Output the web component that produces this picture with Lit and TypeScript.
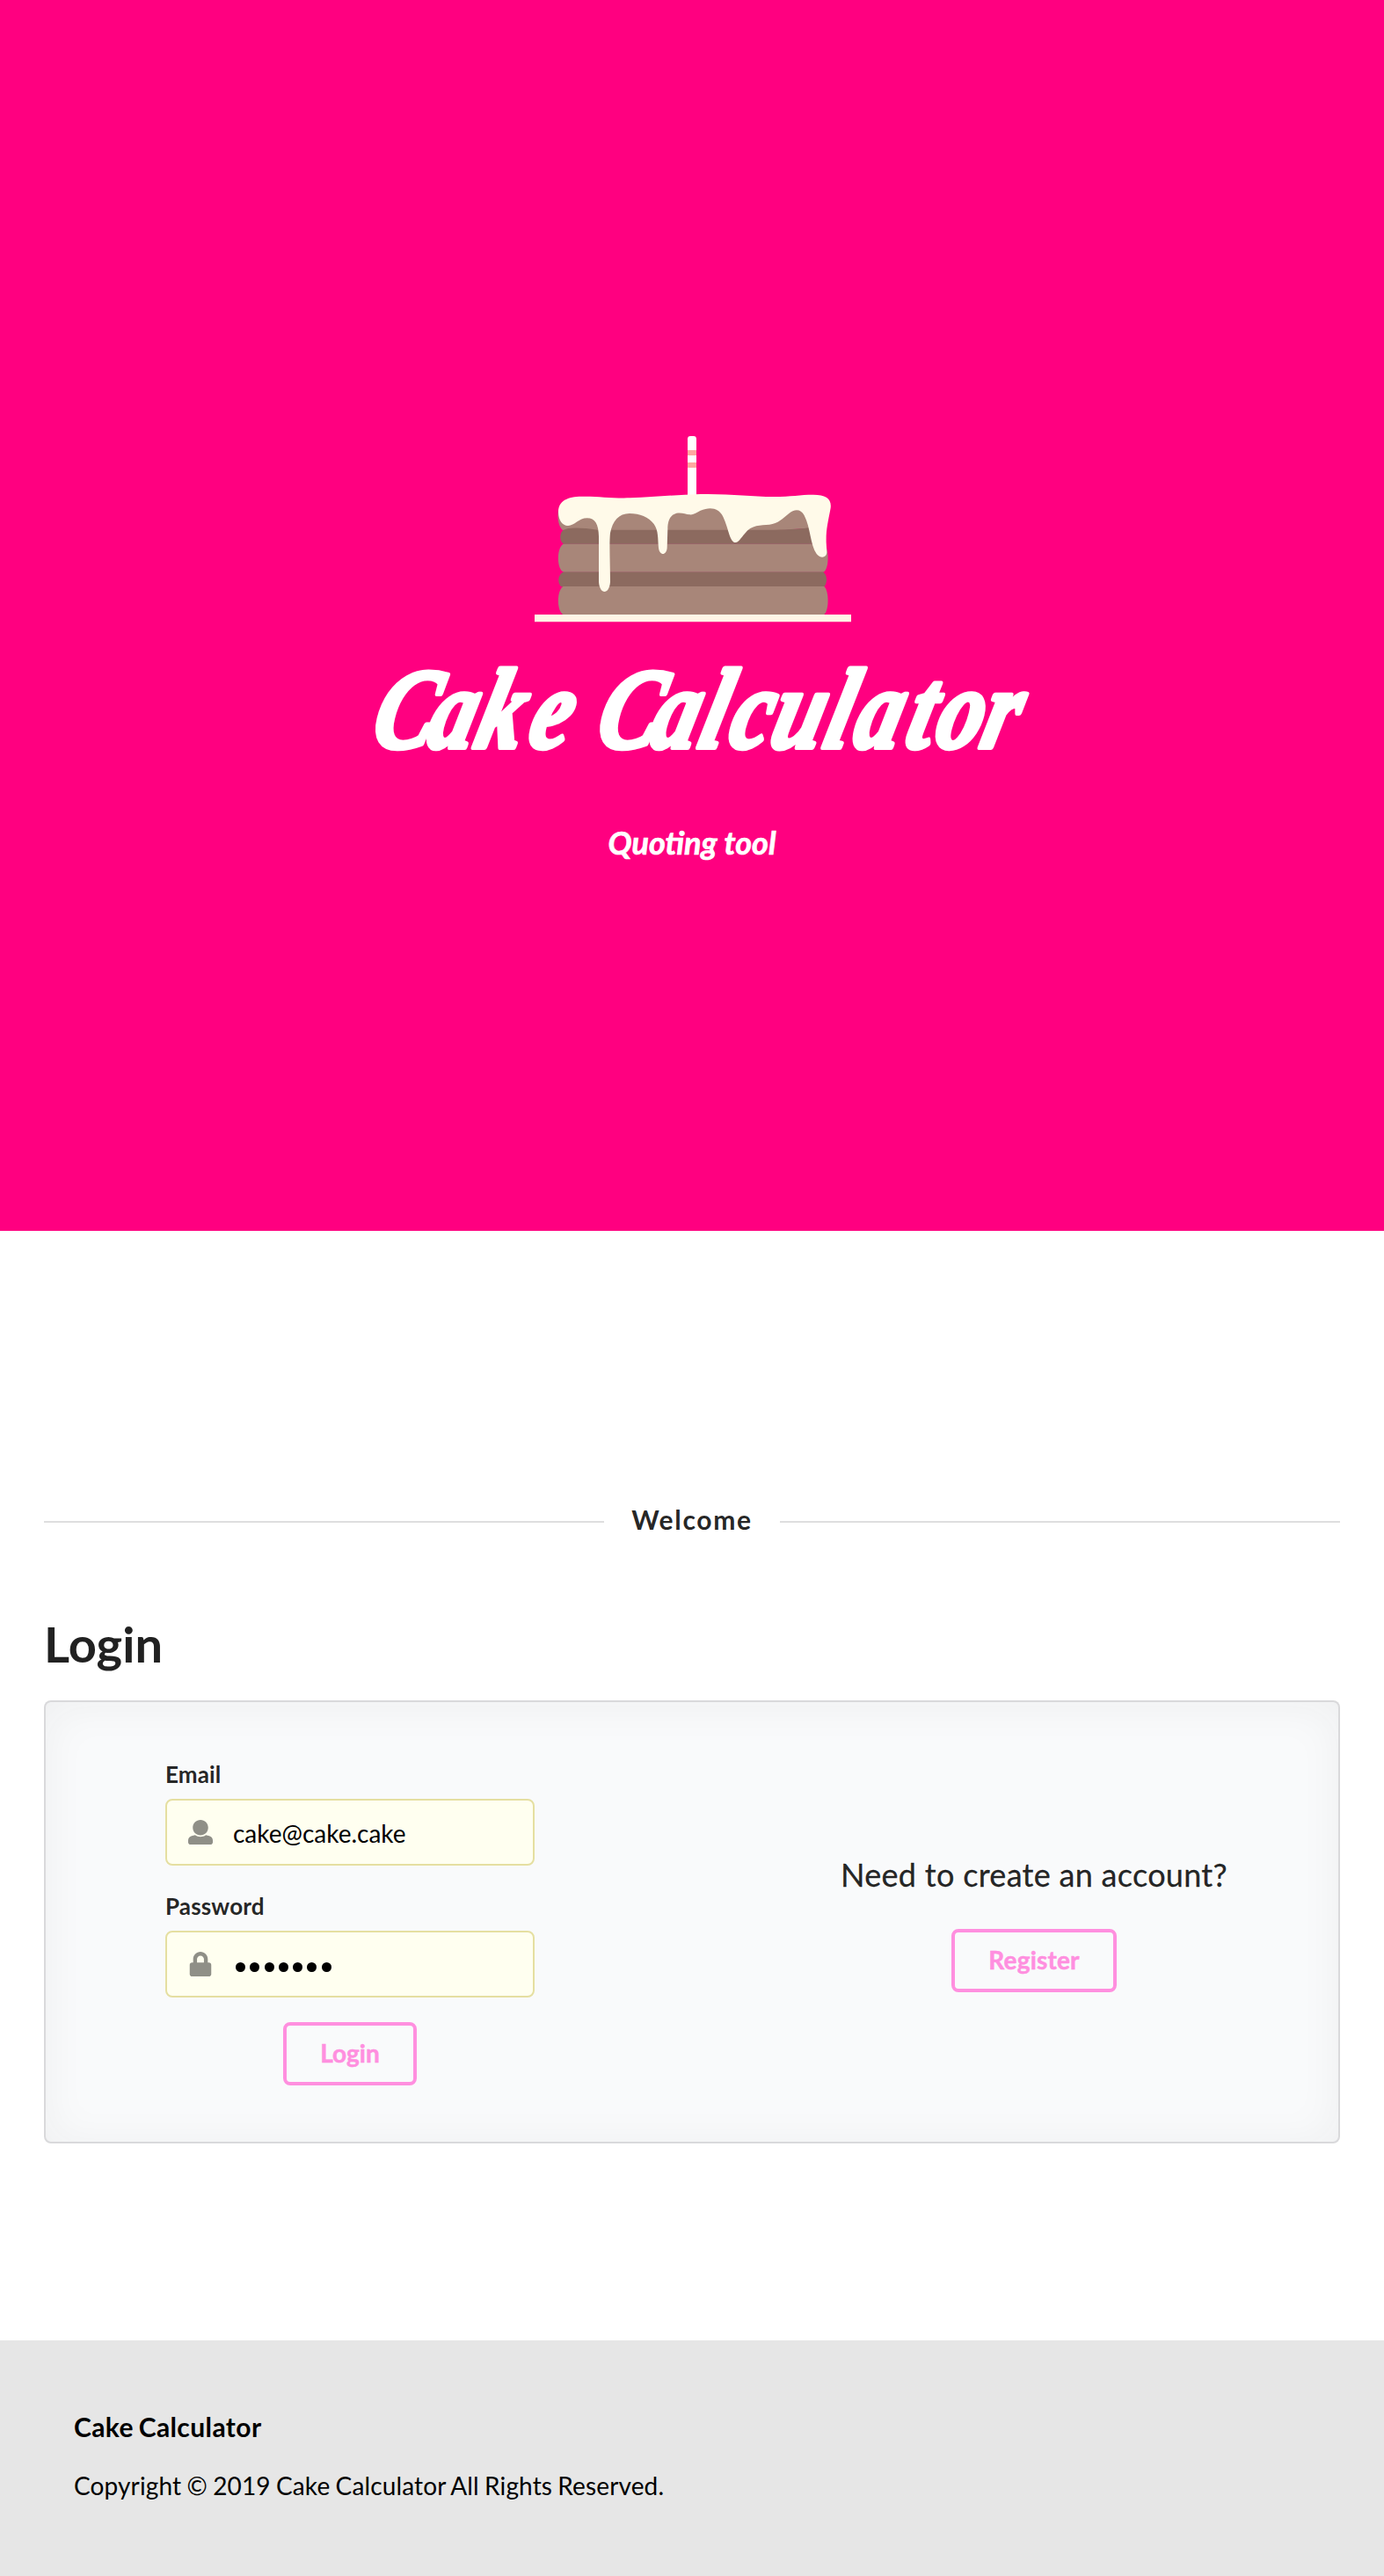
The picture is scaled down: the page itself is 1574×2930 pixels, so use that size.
import { LitElement, html, css } from "lit";
import { customElement } from "lit/decorators.js";

@customElement("cake-logo")
class CakeLogo extends LitElement {
  static styles = css`
    :host { display: block; }
    svg { display: block; overflow: visible; }
    .script {
      font-family: "Liberation Serif", serif;
      font-weight: 700;
      font-style: italic;
      font-size: 129px;
      fill: #fff;
      stroke: #fff;
      stroke-width: 6px;
      stroke-linejoin: round;
    }
  `;
  render() {
    return html`
      <svg width="900" height="420" viewBox="337 480 900 420" role="img" aria-label="Cake Calculator">
        <g transform="translate(590 480) scale(0.333333)">
          <path fill="#9c656b" d="M152 365H1040V657H152z" />
          <path fill="#a88679" d="M135 300C130 330 138 362 151 369L300 370H870L1000 362L1040 300V275H160z" />
          <path fill="#8c6a5f" d="M151 369C170 358 215 360 268 368H870C930 367 965 364 1000 359L1030 415H151C139 405 138 382 151 369z" />
          <path fill="#a88679" d="M151 417H1042C1059 432 1059 496 1042 511H151C129 500 129 430 151 417z" />
          <path fill="#8c6a5f" d="M149 513H1040C1054 525 1052 550 1042 562H145C132 550 132 525 149 513z" />
          <path fill="#a88679" d="M151 561H1042C1059 576 1059 642 1042 657H151C129 644 129 576 151 561z" />
          <path fill="#fff" d="M576 260V58Q576 48 586 48H596Q606 48 606 58V260z" />
          <path fill="#ffa8a0" d="M576 96h30v18h-30zM576 138h30v18h-30z" />
          <path fill="#fffae9" d="M135 308C134 270 165 254 215 254C275 253 315 261 380 259C465 256 540 248 620 246C720 244 790 255 870 255C930 255 960 248 1005 248C1048 248 1068 262 1064 293C1055 342 1048 365 1049 410L1051 445C1050 465 1028 466 1016 450C994 420 996 360 974 319C962 296 941 296 921 313C901 329 885 347 855 350C824 353 795 349 771 381C758 396 749 411 740 411C719 411 717 365 697 323C682 292 652 289 620 302C605 309 594 318 583 316C569 314 556 308 538 311C516 317 508 338 508 364L506 430C504 457 480 457 477 430C474 397 477 371 461 348C443 324 413 312 378 312C341 312 320 338 312 379C308 416 312 484 312 545C309 590 276 590 273 545L273 390C272 350 261 328 233 328C205 328 190 354 168 354C148 353 136 335 135 308z" />
          <path fill="#fff5e6" d="M54 657H1134V682H54z" />
        </g>
        <g transform="translate(0 850) skewX(-14) scale(0.8 1)">
          <text class="script" y="0" x="524 603 671 747 800 843 920 989 1032 1091 1167 1209 1283 1325 1390">Cake Calculator</text>
        </g>
      </svg>
    `;
  }
}

@customElement("app-root")
class AppRoot extends LitElement {
  static styles = css`
    :host {
      display: block;
      font-family: Lato, "Liberation Sans", sans-serif;
      font-size: 28px;
      line-height: 40px;
      color: rgba(0, 0, 0, 0.87);
      background: #fff;
    }
    * { box-sizing: border-box; }
    h1, h2, h3, h4, p { margin: 0; }
    .hero {
      height: 1400px;
      padding-top: 480px;
      background: #ff0080;
      display: flex;
      flex-direction: column;
      align-items: center;
    }
    .tagline {
      margin-top: 35px;
      font-size: 36px;
      line-height: 46px;
      font-weight: 700;
      font-style: italic;
      color: #fff;
      -webkit-text-stroke: 0.7px #fff;
    }
    .main { padding: 311px 50px 224px; }
    .divider {
      display: flex;
      align-items: center;
      gap: 31px;
      height: 40px;
      font-size: 30px;
      font-weight: 700;
      letter-spacing: 1.7px;
    }
    .caption { height: 40px; line-height: 35px; }
    .rule { flex: 1; height: 2px; background: #dededf; }
    .title {
      margin-top: 83px;
      font-size: 56px;
      line-height: 72px;
      font-weight: 700;
    }
    .panel {
      margin-top: 28px;
      height: 504px;
      display: grid;
      grid-template-columns: 696px 1fr;
      align-items: center;
      border: 2px solid rgba(34, 36, 38, 0.15);
      border-radius: 8px;
      background: #f9fafb;
      box-shadow: 0 4px 50px rgba(34, 36, 38, 0.05) inset;
    }
    .form {
      width: 420px;
      margin-left: 136px;
      padding-top: 1px;
      display: flex;
      flex-direction: column;
    }
    .label { font-size: 26px; line-height: 34px; font-weight: 700; margin-bottom: 11px; letter-spacing: 0.15px; }
    .field {
      display: flex;
      align-items: center;
      height: 76px;
      margin-bottom: 29px;
      padding: 0 24px;
      border: 2px solid #e5dfa1;
      border-radius: 8px;
      background: #fffff0;
      color: #000;
    }
    .field.last { margin-bottom: 28px; }
    .value { padding-top: 2px; }
    .icon { width: 28px; height: 28px; margin-right: 23px; fill: #8f8f87; }
    .dots { display: flex; gap: 5.3px; padding: 6px 0 0 3px; }
    .dot { width: 11px; height: 11px; border-radius: 50%; background: #000; }
    .btn {
      width: 152px;
      height: 72px;
      padding: 0 0 2px;
      border: 4px solid #ff8fdf;
      border-radius: 8px;
      background: transparent;
      color: #ff8fdf;
      font: 700 28px/28px Lato, sans-serif;
      -webkit-text-stroke: 0.5px #ff8fdf;
    }
    .btn.wide { width: 188px; letter-spacing: 0.2px; }
    .form .btn { align-self: center; }
    .signup { display: flex; flex-direction: column; align-items: center; padding-left: 82px; }
    .ask {
      font-size: 36px;
      line-height: 52px;
      margin-bottom: 36px;
      letter-spacing: 0.3px;
      -webkit-text-stroke: 0.3px;
    }
    .footer {
      height: 268px;
      padding: 78px 84px;
      background: #e6e6e6;
      color: #000;
    }
    .brand { font-size: 30px; line-height: 40px; font-weight: 700; letter-spacing: 0.4px; word-spacing: -2px; }
    .copy { margin-top: 27px; letter-spacing: 0.13px; word-spacing: -1px; }
  `;
  render() {
    return html`
      <header class="hero">
        <cake-logo></cake-logo>
        <h2 class="tagline">Quoting tool</h2>
      </header>
      <main class="main">
        <h4 class="divider"><span class="rule"></span><span class="caption">Welcome</span><span class="rule"></span></h4>
        <h1 class="title">Login</h1>
        <section class="panel">
          <div class="form">
            <div class="label">Email</div>
            <div class="field">
              <svg class="icon" viewBox="0 0 512 512"><path d="M256 0c88.366 0 160 71.634 160 160s-71.634 160-160 160S96 248.366 96 160 167.634 0 256 0zm183.283 333.821l-71.313-17.828c-74.923 53.89-165.738 41.864-223.94 0l-71.313 17.828C29.981 344.505 0 382.903 0 426.955V464c0 26.51 21.49 48 48 48h416c26.51 0 48-21.49 48-48v-37.045c0-44.052-29.981-82.45-72.717-93.134z" /></svg>
              <span class="value">cake@cake.cake</span>
            </div>
            <div class="label">Password</div>
            <div class="field last">
              <svg class="icon" viewBox="-32 0 512 512"><path d="M400 224h-24v-72C376 68.2 307.8 0 224 0S72 68.2 72 152v72H48c-26.5 0-48 21.5-48 48v192c0 26.5 21.5 48 48 48h352c26.5 0 48-21.5 48-48V272c0-26.5-21.5-48-48-48zm-104 0H152v-72c0-39.7 32.3-72 72-72s72 32.3 72 72v72z" /></svg>
              <span class="dots">${Array.from({ length: 7 }, () => html`<span class="dot"></span>`)}</span>
            </div>
            <button class="btn">Login</button>
          </div>
          <div class="signup">
            <p class="ask">Need to create an account?</p>
            <button class="btn wide">Register</button>
          </div>
        </section>
      </main>
      <footer class="footer">
        <h4 class="brand">Cake Calculator</h4>
        <p class="copy">Copyright © 2019 Cake Calculator All Rights Reserved.</p>
      </footer>
    `;
  }
}
